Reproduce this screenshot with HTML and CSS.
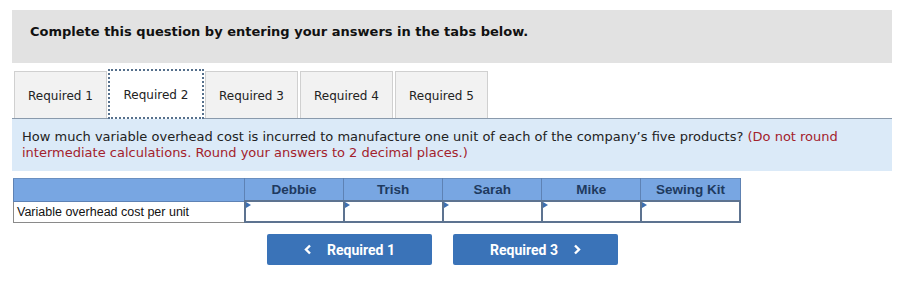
FILE: index.html
```html
<!DOCTYPE html>
<html lang="en">
<head>
    <meta charset="UTF-8">
    <title>Required 2</title>
    <link rel="stylesheet" href="styles.css">
</head>
<body>

    <div class="page">
        <div class="intro">
            <strong>Complete this question by entering your answers in the tabs below.</strong>
        </div>

        <div class="tabs">
            <div class="tab">Required 1</div>
            <div class="tab active">Required 2</div>
            <div class="tab">Required 3</div>
            <div class="tab">Required 4</div>
            <div class="tab">Required 5</div>
        </div>

        <div class="question">
            How much variable overhead cost is incurred to manufacture one unit of each of the company’s five products?
            <span class="hint">(Do not round intermediate calculations. Round your answers to 2 decimal places.)</span>
        </div>

        <table class="answers">
            <tr>
                <th class="label"></th>
                <th>Debbie</th>
                <th>Trish</th>
                <th>Sarah</th>
                <th>Mike</th>
                <th>Sewing Kit</th>
            </tr>
            <tr>
                <td class="label">Variable overhead cost per unit</td>
                <td class="entry"></td>
                <td class="entry"></td>
                <td class="entry"></td>
                <td class="entry"></td>
                <td class="entry"></td>
            </tr>
        </table>

        <div class="nav">
            <button class="navBtn">
                <svg class="chev" width="8" height="11" viewBox="0 0 8 11"><path d="M6 1.5 L2 5.5 L6 9.5" fill="none" stroke="#fff" stroke-width="2.4"/></svg>
                Required 1
            </button>
            <button class="navBtn">
                Required 3
                <svg class="chev" width="8" height="11" viewBox="0 0 8 11"><path d="M2 1.5 L6 5.5 L2 9.5" fill="none" stroke="#fff" stroke-width="2.4"/></svg>
            </button>
        </div>
    </div>

</body>
</html>
```

FILE: styles.css
```css
body {
    margin: 0;
    padding: 0;
    background-color: #fff;
    font-family: "DejaVu Sans", Verdana, sans-serif;
    color: #222;
}

.page {
    width: 880px;
    margin-left: 12px;
    padding-top: 10px;
}

.intro {
    background-color: #e2e2e2;
    height: 53px;
    box-sizing: border-box;
    padding: 14px 0 0 18px;
    font-size: 13px;
    color: #111;
}

.tabs {
    display: flex;
    margin-top: 8px;
    padding-left: 2px;
    border-bottom: 1px solid #8a9aac;
    height: 47px;
}

.tab {
    width: 93px;
    height: 47px;
    box-sizing: border-box;
    margin-right: 2px;
    border: 1px solid #d0d0d0;
    border-bottom: none;
    background-color: #f2f2f2;
    font-size: 12px;
    padding-top: 2px;
    display: flex;
    align-items: center;
    justify-content: center;
    color: #222;
}

.tab.active {
    background-color: #fff;
    border: 2px dotted #56708c;
    height: 50px;
    margin-top: -2px;
    width: 96px;
    margin-left: -1px;
    margin-right: 1px;
}

.question {
    background-color: #dbeaf8;
    padding: 10px;
    font-size: 13px;
    line-height: 16px;
    color: #222;
}

.hint {
    color: #a3222c;
}

.answers {
    border-collapse: collapse;
    table-layout: fixed;
    width: 728px;
    margin-top: 7px;
    margin-left: 1px;
    font-family: "Liberation Sans", Arial, sans-serif;
}

.answers th {
    background-color: #78a6e2;
    color: #1e3a60;
    font-size: 13.5px;
    font-weight: bold;
    height: 21px;
    padding: 0;
    border: 1px solid #5e82b4;
    border-top: 1px solid #6a8fc0;
}

.answers th.label {
    width: 230px;
    border-right: 1px solid #5e82b4;
}

.answers td {
    height: 19px;
    padding: 0;
}

.answers td.label {
    border: 1px solid #8a8a8a;
    font-size: 12.5px;
    padding-left: 3px;
    color: #111;
    white-space: nowrap;
}

.answers td.entry {
    position: relative;
    border: 2px solid #5d7390;
    background-color: #fff;
}

.answers td.entry::before {
    content: "";
    position: absolute;
    top: 0;
    left: 0;
    border-top: 3px solid transparent;
    border-bottom: 3px solid transparent;
    border-left: 5px solid #3d6fb0;
}

.nav {
    display: flex;
    gap: 21px;
    margin-top: 11px;
    padding-left: 255px;
}

.navBtn {
    width: 165px;
    height: 31px;
    background-color: #3a73b8;
    color: #fff;
    border: none;
    border-radius: 2px;
    font-family: Roboto, "Liberation Sans", sans-serif;
    font-weight: bold;
    font-size: 14px;
    cursor: pointer;
    display: flex;
    align-items: center;
    justify-content: center;
    gap: 15px;
}
```
